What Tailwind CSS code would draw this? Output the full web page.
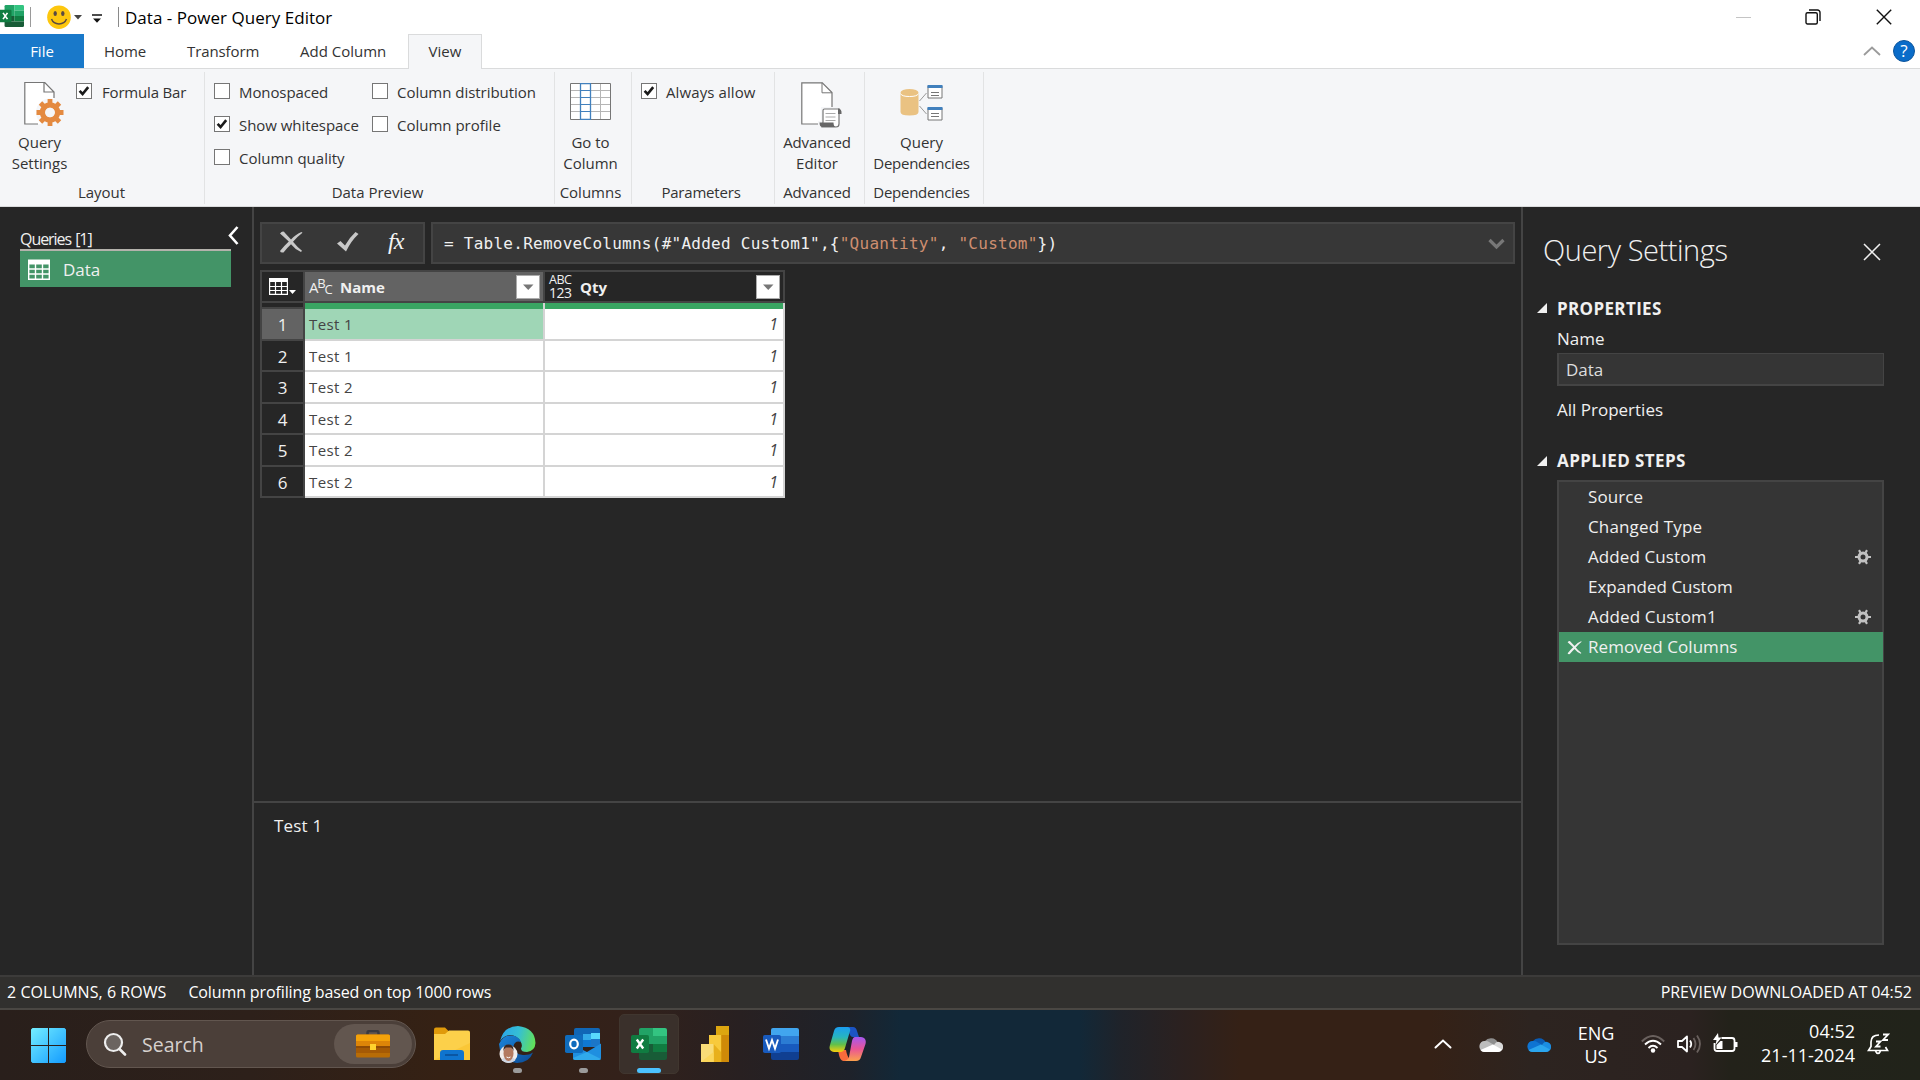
<!DOCTYPE html>
<html lang="en">
<head>
<meta charset="utf-8">
<title>Data - Power Query Editor</title>
<script src="https://cdn.jsdelivr.net/npm/@tailwindcss/browser@4"></script>
</head>
<body class="w-[1920px] h-[1080px] overflow-hidden bg-[#262626] font-['Open_Sans','Noto_Sans',sans-serif] flex flex-col text-[15px] leading-[20px] whitespace-nowrap">

<svg class="hidden">
  <defs>
    <symbol id="check" viewBox="0 0 16 16"><rect x=".5" y=".5" width="15" height="15" fill="#fff" stroke="#767676"/><path d="M3.600 7.800 6.600 11 12.200 4.200" fill="none" stroke="#1a1a1a" stroke-width="2.600"/></symbol>
    <symbol id="uncheck" viewBox="0 0 16 16"><rect x=".5" y=".5" width="15" height="15" fill="#fff" stroke="#767676"/></symbol>
    <symbol id="excel" viewBox="0 0 36 34">
      <path d="M8 3a2 2 0 0 1 2-2h12v16H8z" fill="#21a366"/><path d="M22 1h12a2 2 0 0 1 2 2v6H22z" fill="#33c481"/><path d="M22 9h14v8H22z" fill="#21a366"/><path d="M8 17h14v8H8z" fill="#185c37"/><path d="M22 17h14v8H22z" fill="#107c41"/><path d="M8 25h28v6a2 2 0 0 1-2 2H10a2 2 0 0 1-2-2z" fill="#185c37"/>
      <rect x="0" y="8" width="18" height="18" rx="1.800" fill="#107c41"/><path d="M5.800 12.500 12.200 21.500M12.200 12.500 5.800 21.500" stroke="#fff" stroke-width="2.400"/>
    </symbol>
    <symbol id="gear" viewBox="0 0 16 16"><g fill="none" stroke="#c2c2c2"><circle cx="8" cy="8" r="4" stroke-width="3"/><path d="M0 8h3M13 8h3M4 1.100l1.500 2.600M10.500 12.300l1.500 2.600M12 1.100l-1.500 2.600M5.500 12.300l-1.500 2.600" stroke-width="2.200"/></g></symbol>
    <symbol id="cloud" viewBox="0 0 24 16"><path d="M6 5a7 6 0 0 1 12.500 1L12 11z" class="fill-[var(--a)]"/><path d="M5 16a5 5.500 0 0 1 .8-11 6 6 0 0 1 4.700 1.200L17 10 6 16z" class="fill-[var(--b)]"/><path d="M16 7.500a4 4 0 0 1 3-1.800A5 5 0 0 1 19 16l-6-5z" class="fill-[var(--c)]"/><path d="M1.500 14 14 8.500l9 5a5 5 0 0 1-4 2.500H5a5 5 0 0 1-3.500-2z" class="fill-[var(--d)]"/></symbol>
    <symbol id="drop" viewBox="0 0 24 24"><rect x=".5" y=".5" width="23" height="23" fill="#fff" stroke="#ababab"/><path d="M7 9.500h10.500L12.250 15z" fill="#777"/></symbol>
  </defs>
</svg>

<!-- Title bar -->
<header class="h-[34px] bg-white flex items-center text-black shrink-0">
  <svg class="w-[25px] h-[24px] -ml-px mb-0.5" viewBox="0 0 36 34"><use href="#excel"/></svg>
  <div class="w-px h-5 bg-[#9a9a9a] ml-[6px] mb-px"></div>
  <svg class="w-[24px] h-[24px] ml-4" viewBox="0 0 24 24"><circle cx="12" cy="12.200" r="11.800" fill="#fdc70e"/><ellipse cx="8.200" cy="8.500" rx="1.700" ry="2.500" fill="#5a4a42"/><ellipse cx="15.800" cy="8.500" rx="1.700" ry="2.500" fill="#5a4a42"/><path d="M4.500 14C7 20.500 17 20.500 19.500 14" fill="none" stroke="#5a4a42" stroke-width="1.500"/></svg>
  <svg class="w-[8px] h-[5px] ml-[3px]" viewBox="0 0 8 5"><path d="M0 0h8L4 4.500z" fill="#444"/></svg>
  <svg class="w-[10px] h-[10px] ml-[10px] mt-1" viewBox="0 0 10 10"><path d="M0 1h10" stroke="#111" stroke-width="1.500"/><path d="M1 4.500h8L5 8.800z" fill="#111"/></svg>
  <div class="w-px h-5 bg-[#8a8a8a] ml-[16px] mb-px"></div>
  <span class="ml-[6px] text-[17px] tracking-[0.03px] mt-0.5">Data - Power Query Editor</span>
  <div class="ml-auto flex items-center pr-[28px]">
    <div class="w-[15px] h-px bg-[#c4c4c4] mr-[54px]"></div>
    <svg class="w-[16px] h-[16px] mr-[55px]" viewBox="0 0 16 16" fill="none" stroke="#111" stroke-width="1.400"><rect x="1" y="3.700" width="11.300" height="11.300" rx="1.500"/><path d="M4 1h8.500A2.500 2.500 0 0 1 15 3.500V12"/></svg>
    <svg class="w-[16px] h-[16px]" viewBox="0 0 16 16" stroke="#111" stroke-width="1.400"><path d="M.8.800 15.200 15.200M15.200.800.800 15.200"/></svg>
  </div>
</header>

<!-- Tab strip -->
<nav class="h-[35px] bg-white border-b border-[#dadbdc] flex shrink-0 text-[#333] leading-[34px]">
  <div class="w-[84px] h-[34px] bg-[#1979ca] text-white text-center">File</div>
  <div class="w-[82px] pl-[20px] tracking-[-0.1px]">Home</div>
  <div class="w-[112px] pl-[21px] tracking-[-0.1px]">Transform</div>
  <div class="w-[130px] pl-[22px]">Add Column</div>
  <div class="w-[74px] h-[35px] border border-b-0 border-[#dadbdc] bg-[#f5f6f8] text-center leading-[32px]">View</div>
  <div class="ml-auto flex items-center pr-[5px]">
    <svg class="w-[18px] h-[10px] mr-[12px]" viewBox="0 0 18 10"><path d="M1 9 9 1.500 17 9" fill="none" stroke="#9b9b9b" stroke-width="1.800"/></svg>
    <div class="w-[22px] h-[22px] rounded-full bg-[#0a6cc9] border border-[#0d559c] text-white text-[17px] leading-[20px] text-center">?</div>
  </div>
</nav>

<!-- Ribbon -->
<section class="h-[138px] bg-[#f5f6f8] border-b border-[#dadbdc] flex shrink-0 text-[#333] pt-[3px] pb-[2px]">
  <div class="w-[205px] border-r border-[#e2e3e4] flex flex-col">
    <div class="h-[111px] flex">
      <div class="w-[72px] pl-[7px] pt-[9px] flex flex-col items-center">
        <svg class="w-[42px] h-[47px] ml-[10px] shrink-0" viewBox="0 0 42 47"><path d="M1 1.500h20l9 10V43H1z" fill="#fff"/><path d="M14 43H.8V1.500h20L30 11v6M20 1.500V11h10" fill="none" stroke="#767676" stroke-width="1.200"/><circle cx="26" cy="31.500" r="14" fill="#f5f6f8"/><g fill="none" stroke="#e48a40"><circle cx="26" cy="31.500" r="7.500" stroke-width="5.500"/><path d="M26 18v6M26 39v6M12.500 31.500h6M33.500 31.500h6M16.500 22l4 4M31.500 37l4 4M16.500 41l4-4M31.500 26l4-4" stroke-width="4.800"/></g><circle cx="26" cy="31.500" r="4.800" fill="#f5f6f8"/></svg>
        <div class="text-center leading-[21px] mt-[4px]">Query<br>Settings</div>
      </div>
      <div class="pl-[4px] pt-[11px] flex gap-[10px]"><svg class="w-4 h-4"><use href="#check"/></svg><span class="-mt-px tracking-[-0.18px]">Formula Bar</span></div>
    </div>
    <div class="text-center leading-[20px] -mt-px pr-px">Layout</div>
  </div>
  <div class="w-[350px] border-r border-[#e2e3e4] flex flex-col">
    <div class="h-[111px] flex pt-[11px] pl-[9px]">
      <div class="w-[158px] flex flex-col gap-[13px]">
        <div class="flex gap-[9px] h-5"><svg class="w-4 h-4"><use href="#uncheck"/></svg><span class="-mt-px tracking-[-0.1px]">Monospaced</span></div>
        <div class="flex gap-[9px] h-5"><svg class="w-4 h-4"><use href="#check"/></svg><span class="-mt-px tracking-[-0.05px]">Show whitespace</span></div>
        <div class="flex gap-[9px] h-5"><svg class="w-4 h-4"><use href="#uncheck"/></svg><span class="-mt-px">Column quality</span></div>
      </div>
      <div class="flex flex-col gap-[13px]">
        <div class="flex gap-[9px] h-5"><svg class="w-4 h-4"><use href="#uncheck"/></svg><span class="-mt-px tracking-[-0.03px]">Column distribution</span></div>
        <div class="flex gap-[9px] h-5"><svg class="w-4 h-4"><use href="#uncheck"/></svg><span class="-mt-px">Column profile</span></div>
      </div>
    </div>
    <div class="text-center leading-[20px] -mt-px pr-[4px]">Data Preview</div>
  </div>
  <div class="w-[77px] border-r border-[#e2e3e4] flex flex-col items-center pr-[5px]">
    <div class="h-[111px] pt-[11px] text-center leading-[21px]">
      <svg class="w-[41px] h-[37px] ml-[7px] mb-[12px]" viewBox="0 0 41 37"><path d="M.5.500h40v36H.5z" fill="#fff"/><g fill="none" stroke="#b5b5b5"><path d="M0 7.500h41M0 14.500h41M0 21.500h41M0 28.500h41M30.500 0v37"/></g><g stroke="#4180bd"><path d="M10.500 7.500h10M10.500 14.500h10M10.500 21.500h10M10.500 28.500h10"/></g><path d="M.5.500h40v36H.5z" fill="none" stroke="#767676"/><path d="M10.500.500h10v36h-10z" fill="none" stroke="#4180bd" stroke-width="1.300"/></svg>
      Go to<br>Column
    </div>
    <div class="leading-[20px] -mt-px">Columns</div>
  </div>
  <div class="w-[143px] border-r border-[#e2e3e4] flex flex-col items-center">
    <div class="h-[111px] w-full pt-[11px] pl-[9px] flex gap-[9px]"><svg class="w-4 h-4"><use href="#check"/></svg><span class="-mt-px tracking-[0.1px]">Always allow</span></div>
    <div class="leading-[20px] -mt-px pr-[4px] tracking-[-0.2px]">Parameters</div>
  </div>
  <div class="w-[90px] border-r border-[#e2e3e4] flex flex-col items-center pr-[5px]">
    <div class="h-[111px] pt-[10px] text-center leading-[21px]">
      <svg class="w-[42px] h-[46px] ml-[18px] mb-[4px]" viewBox="0 0 42 46"><path d="M.8.800h20.500L31 10.500V42H.8z" fill="#fff" stroke="#767676" stroke-width="1.200"/><path d="M21 .800V10.800h10" fill="none" stroke="#767676"/><path d="M20 25h22v21H17V39h3z" fill="#f5f6f8"/><path d="M22 40V28.500q0-1.500 1.500-1.500H38v15q0 3-3 3H21z" fill="#fff" stroke="#767676" stroke-width="1.200"/><path d="M24.500 31.500h10M24.500 35h10M24.500 38.500h10" stroke="#aaa"/><path d="M18.500 40.500h14q0 4 2.500 4.500H21.500q-3 0-3-4.500zM37 26.500q4 0 3.500 5.500H37z" fill="#666"/></svg>
      <div class="tracking-[-0.1px]">Advanced</div>Editor
    </div>
    <div class="leading-[20px] -mt-px tracking-[-0.1px]">Advanced</div>
  </div>
  <div class="w-[119px] border-r border-[#e2e3e4] flex flex-col items-center pr-[5px]">
    <div class="h-[111px] pt-[12px] text-center leading-[21px]">
      <svg class="w-[43px] h-[38px] mx-auto mb-[10px]" viewBox="0 0 43 38"><path d="M.5 9v19q0 3.500 9 3.500t9-3.500V9z" fill="#eac282"/><ellipse cx="9.500" cy="8.500" rx="9" ry="3.500" fill="#eac282"/><path d="M.5 9.500q1 3 9 3t9-3" fill="none" stroke="#fff"/><path d="M19.500 17 26.500 9M19.500 22 26.500 30" stroke="#999"/><g fill="#fff" stroke="#767676"><path d="M28 2h14v12H28zM28 24h14v12H28z"/><path d="M31 8.500h8M31 11.500h8M31 29.500h8M31 32.500h8"/></g><path d="M27.500 1h15v3h-15zM27.500 23h15v3h-15z" fill="#4180bd"/></svg>
      Query<br><span class="tracking-[-0.25px]">Dependencies</span>
    </div>
    <div class="leading-[20px] -mt-px tracking-[-0.25px]">Dependencies</div>
  </div>
</section>

<!-- Workspace -->
<main class="h-[768px] flex shrink-0 text-[#f0f0f0]">
  <!-- Query list -->
  <aside class="w-[254px] border-r-2 border-[#444] pl-[20px]">
    <div class="h-[42px] flex items-end justify-between w-[211px]">
      <span class="text-[16px] leading-[20px] tracking-[-1.05px] [word-spacing:1px]">Queries [1]</span>
      <svg class="w-[12px] h-[19px] mb-[4px] -mr-[8px]" viewBox="0 0 12 19"><path d="M10.500 1 3 9.500 10.500 18" fill="none" stroke="#fff" stroke-width="2.600"/></svg>
    </div>
    <div class="w-[211px] h-[38px] bg-[#439467] border-t-2 border-[#b4b2ac] flex items-center pl-[8px]">
      <svg class="w-[22px] h-[21px]" viewBox="0 0 22 21" fill="none" stroke="#fff"><path d="M0 3h22" stroke-width="5"/><path d="M.7 3v17.300h20.600V3M0 10h22M0 15h22M7.500 4v16M14.500 4v16" stroke-width="1.400"/></svg>
      <span class="ml-[13px] text-[17px] mt-px">Data</span>
    </div>
  </aside>

  <!-- Preview -->
  <section class="w-[1267px] flex flex-col">
    <div class="h-[594px] pl-[6px] pt-[15px]">
      <div class="flex gap-[6px] h-[42px]">
        <div class="w-[165px] border-2 border-[#444] bg-[#373737] flex items-center pl-[17px]">
          <svg class="w-[24px] h-[22px] -mt-0.5" viewBox="0 0 24 22"><path d="M1 2.500Q4-1 6 2l6 6.500Q17 3 22.500 1l1 .8Q18 6 14 10.800q4 5 9 9l-1 1.200q-6-2.500-10-7.700Q8 17 4.500 21.500q-3 .5-3.500-1.500Q5 15 9.800 10.500 5 6 1 2.500z" fill="#c8c8c8"/></svg>
          <svg class="w-[22px] h-[20px] ml-[34px] -mt-0.5" viewBox="0 0 22 20"><path d="M0 11.500 3.500 9 8 13.500Q12 6 18.500 0L21.500 2Q14 9 9 19.500z" fill="#c8c8c8"/></svg>
          <span class="ml-[29px] text-[24px] italic font-['Liberation_Serif',serif] tracking-[-1px] text-[#f4f4f4] pb-1">fx</span>
        </div>
        <div class="w-[1084px] border-2 border-[#444] bg-[#373737] flex items-center justify-between pl-[11px] pr-[8px]">
          <span class="mt-px font-['DejaVu_Sans_Mono',monospace] text-[16px] tracking-[0.26px] whitespace-pre">= Table.RemoveColumns(#"Added Custom1",{<span class="text-[#ce8e70]">"Quantity"</span>, <span class="text-[#ce8e70]">"Custom"</span>})</span>
          <svg class="w-[17px] h-[12px] mt-px" viewBox="0 0 17 12"><path d="M1.500 2 8.500 9 15.500 2" fill="none" stroke="#777" stroke-width="3.200"/></svg>
        </div>
      </div>

      <div class="mt-[6px] w-[525px]">
        <div class="grid grid-cols-[45px_240px_240px] h-[33px] bg-[#444] pt-[2px] pb-[2px]">
          <div class="bg-[#262626] ml-[2px] mr-[2px] flex items-center pl-[7px] gap-px">
            <svg class="w-[19px] h-[17px]" viewBox="0 0 19 17" fill="none" stroke="#fff"><path d="M0 2h19" stroke-width="4"/><path d="M.6 2v14.400h17.800V2M0 8.500h19M0 12.500h19M6.500 4v13M12.500 4v13" stroke-width="1.200"/></svg>
            <svg class="w-[7px] h-[4px] mt-[10px]" viewBox="0 0 7 4"><path d="M0 0h7L3.500 4z" fill="#fff"/></svg>
          </div>
          <div class="bg-[#636363] mr-[2px] flex items-center px-[4px] pr-[3px]">
            <span class="flex items-center text-[13px] leading-[14px] tracking-[-1.200px] w-[31px]"><span class="text-[15px]">A</span><span class="-mt-[8px]">B</span><span class="mt-[5px]">C</span></span>
            <span class="font-bold">Name</span>
            <svg class="w-6 h-6 ml-auto"><use href="#drop"/></svg>
          </div>
          <div class="bg-[#262626] mr-[2px] flex items-center px-[4px] pr-[3px]">
            <span class="flex flex-col w-[31px]"><span class="text-[12.5px] leading-[12px] tracking-[-0.5px]">ABC</span><span class="text-[14px] leading-[13px] tracking-[-0.5px]">123</span></span>
            <span class="font-bold">Qty</span>
            <svg class="w-6 h-6 ml-auto"><use href="#drop"/></svg>
          </div>
        </div>
        <div class="grid grid-cols-[45px_238px_2px_238px_2px] h-[6px]">
          <div class="bg-[#262626] border-x-2 border-b-2 border-[#444]"></div><div class="bg-[#39a562]"></div><div class="bg-[#d4d4d4]"></div><div class="bg-[#39a562]"></div><div class="bg-[#d4d4d4]"></div>
        </div>
        <div id="rows" class="text-[#444]"></div>
      </div>
    </div>
    <div class="h-[173px] border-t-2 border-[#444] pt-[13px] pl-[20px] text-[17px] tracking-[0.2px]">Test 1</div>
  </section>

  <!-- Query settings -->
  <aside class="w-[399px] border-l-2 border-[#444] pl-[14px] pr-[36px] text-[17px]">
    <div class="flex items-center justify-between h-[86px] pl-[6px] pr-[3px]">
      <span class="text-[29px] leading-[40px] font-light tracking-[-0.45px]">Query Settings</span>
      <svg class="w-[18px] h-[18px] mt-[4px]" viewBox="0 0 18 18" stroke="#f0f0f0" stroke-width="1.500"><path d="M1 1 17 17M17 1 1 17"/></svg>
    </div>
    <div class="flex items-center h-[30px]"><svg class="w-[10px] h-[10px] mr-[10px]" viewBox="0 0 10 10"><path d="M10 0v10H0z" fill="#f0f0f0"/></svg><span class="font-bold tracking-[0.35px] mt-px">PROPERTIES</span></div>
    <div class="pl-[20px]">
      <div class="h-[30px] leading-[32px]">Name</div>
      <div class="h-[33px] border-2 border-r border-t border-[#444] bg-[#353535] pl-[7px] leading-[32px] text-[#ddd]">Data</div>
      <div class="h-[47px] leading-[47px]">All Properties</div>
    </div>
    <div class="flex items-center h-[54px] pt-[2px]"><svg class="w-[10px] h-[10px] mr-[10px]" viewBox="0 0 10 10"><path d="M10 0v10H0z" fill="#f0f0f0"/></svg><span class="font-bold tracking-[0.4px]">APPLIED STEPS</span></div>
    <div class="-mt-[7px] ml-[20px] h-[465px] border-2 border-[#444] bg-[#353535] leading-[30px]">
      <div class="h-[30px] pl-[29px] tracking-[0.1px]">Source</div>
      <div class="h-[30px] pl-[29px] tracking-[0.15px]">Changed Type</div>
      <div class="h-[30px] pl-[29px] pr-[11px] flex justify-between items-center"><span class="tracking-[0.1px]">Added Custom</span><svg class="w-4 h-4"><use href="#gear"/></svg></div>
      <div class="h-[30px] pl-[29px]">Expanded Custom</div>
      <div class="h-[30px] pl-[29px] pr-[11px] flex justify-between items-center"><span class="tracking-[0.15px]">Added Custom1</span><svg class="w-4 h-4"><use href="#gear"/></svg></div>
      <div class="h-[30px] pl-[8px] -mr-px bg-[#439467] flex items-center gap-[6px]"><svg class="w-[15px] h-[15px]" viewBox="0 0 24 22"><path d="M1 2.500Q4-1 6 2l6 6.500Q17 3 22.500 1l1 .8Q18 6 14 10.800q4 5 9 9l-1 1.200q-6-2.500-10-7.700Q8 17 4.500 21.500q-3 .5-3.500-1.500Q5 15 9.800 10.500 5 6 1 2.500z" fill="#f0f0f0"/></svg><span class="tracking-[0.05px]">Removed Columns</span></div>
    </div>
  </aside>
</main>

<!-- Status bar -->
<footer class="h-[35px] bg-[#31302e] border-t-2 border-t-[#3c3b3a] border-b-2 border-b-[#4a4743] flex items-center px-[8px] pl-[7px] pb-0.5 text-[16px] text-white shrink-0">
  <span class="tracking-[0.05px]">2 COLUMNS, 6 ROWS</span>
  <span class="ml-[22px] tracking-[-0.12px]">Column profiling based on top 1000 rows</span>
  <span class="ml-auto tracking-[-0.03px]">PREVIEW DOWNLOADED AT 04:52</span>
</footer>

<!-- Taskbar -->
<div class="h-[70px] shrink-0 flex items-center text-white bg-[linear-gradient(90deg,#291f1b_0px,#2d201a_250px,#352114_440px,#33211a_620px,#282021_740px,#1e222a_850px,#122838_900px,#122838_1080px,#1f232a_1120px,#2b2120_1180px,#352116_1240px,#352116_1430px,#2d2420_1530px,#2b2220_1690px,#23221a_1730px,#21231a_1920px)]">
  <svg class="w-[35px] h-[35px] ml-[31px]" viewBox="0 0 35 35"><defs><linearGradient id="win" x1="0" y1="0" x2="35" y2="35" gradientUnits="userSpaceOnUse"><stop stop-color="#74eeff"/><stop offset="1" stop-color="#139bff"/></linearGradient></defs><path d="M1.500 0H17v17H0V1.500zM18 0h15.500L35 1.500V17H18zM0 18h17v17H1.500L0 33.500zM18 18h17v15.500L33.500 35H18z" fill="url(#win)"/></svg>
  <div class="ml-[20px] mt-[-2px] w-[330px] h-[48px] rounded-full bg-[#4b3f39] border border-[#62564f] flex items-center pl-[16px] pr-[3px]">
    <svg class="w-[24px] h-[24px]" viewBox="0 0 24 24"><circle cx="10.500" cy="10.500" r="8.500" fill="#6b6460" stroke="#eee" stroke-width="2.200"/><path d="M16.500 17 22 22.500" stroke="#eee" stroke-width="2.600" stroke-linecap="round"/></svg>
    <span class="ml-[15px] text-[19.5px] text-[#d6d1ce] mt-px">Search</span>
    <div class="ml-auto w-[78px] h-[40px] rounded-full bg-[#62564f] flex items-center justify-center">
      <svg class="w-[34px] h-[28px]" viewBox="0 0 34 28"><path d="M11.500 5V3q0-2 2-2h7q2 0 2 2v2" fill="none" stroke="#3a3a40" stroke-width="2.500"/><rect y="4.500" width="34" height="23" rx="1.500" fill="#b86c06"/><path d="M0 6q0-1.500 1.500-1.500h31Q34 4.500 34 6v5H0z" fill="#f4a20a"/><path d="M0 11h34v5H0z" fill="#dd8508"/><path d="M0 16h34v2H0z" fill="#8f4b04"/><path d="M0 18h34v5H0z" fill="#a55a05"/><rect x="14" y="14" width="6" height="6" fill="#ffd22e"/></svg>
    </div>
  </div>
  <svg class="w-[36px] h-[34px] ml-[18px] mt-[-2px]" viewBox="0 0 36 34"><path d="M0 2.500Q0 .5 2 .5h9l4 4v5H0z" fill="#e09a0a"/><path d="M0 7h11l4-3.500h19q2 0 2 2V33H0z" fill="#fcd04a"/><path d="M36 16V33H0z" fill="#f8c12c" opacity=".6"/><path d="M6 33v-7q0-3 3-3h18q3 0 3 3v7z" fill="#0f74cf"/><path d="M11 28h13" stroke="#0a4f99" stroke-width="1.600"/></svg>
  <div class="relative w-[37px] h-[70px] ml-[29px] flex items-center">
    <svg class="w-[37px] h-[37px] -mt-px" viewBox="0 0 37 37"><defs><linearGradient id="ed" x1="0" y1=".3" x2="1" y2=".5"><stop stop-color="#2aa4ea"/><stop offset=".5" stop-color="#35bfd4"/><stop offset="1" stop-color="#62e05a"/></linearGradient><linearGradient id="eb" x1="0" y1="0" x2="1" y2="1"><stop stop-color="#1b86dc"/><stop offset="1" stop-color="#0c4a94"/></linearGradient></defs><path d="M1 15Q5 0 19 0 36 2 36.500 17 36 25 28 26 22 26 22 22.500 24 19 21.500 15.500 18 9 11 9 5 9.500 1 15z" fill="url(#ed)"/><path d="M0 18Q4 9 12 9.500 20 10 22 16 16 14 14.500 20 14 28 24 29 30 29.500 34 26.500 30 37 18 37 1 35 0 18z" fill="url(#eb)"/><ellipse cx="9.500" cy="28" rx="9" ry="9" fill="#f0ecea"/><path d="M2.500 34q2-3 5-3h4q4 1 5 3-3 3-7 3t-7-3z" fill="#cfd6e2"/><ellipse cx="9.500" cy="27.500" rx="5" ry="7.500" fill="#b37a60"/><path d="M4.500 25q-.5-6.500 5-6.500t5 6.500q-1-3-2.500-3.500H7q-1.500.5-2.500 3.500z" fill="#3a2722"/><path d="M7.500 31q2 1.500 4 0" fill="none" stroke="#fff"/></svg>
    <div class="absolute left-[14px] top-[58px] w-[9px] h-[5px] rounded-full bg-[#9b9b9b]"></div>
  </div>
  <div class="relative w-[36px] h-[70px] ml-[29px] flex items-center">
    <svg class="w-[36px] h-[34px] mb-[2px]" viewBox="0 0 36 34"><path d="M9 3q0-2 2-2h22q2 0 2 2v15H9z" fill="#1066b5"/><path d="M18 7h8v6h-8z" fill="#32a9e7"/><path d="M26 6h9v6h-9z" fill="#58d9fd"/><path d="M26 12h9v8h-9z" fill="#1b76c8"/><path d="M18 13h8v7h-8z" fill="#0f78d4"/><path d="M8 18 22 25 36 16.500V31q0 2-2 2H10q-2 0-2-2z" fill="#1f8fe0"/><path d="M22 25 36 32q-1 1-2 1H10q-2 0-2-2z" fill="#35b0ee" opacity=".8"/><rect y="8" width="18" height="18" rx="1.800" fill="#0f6cbd"/><ellipse cx="9" cy="17" rx="3.800" ry="4.300" fill="none" stroke="#fff" stroke-width="2.200"/></svg>
    <div class="absolute left-[14px] top-[58px] w-[9px] h-[5px] rounded-full bg-[#9b9b9b]"></div>
  </div>
  <div class="relative w-[60px] h-[60px] ml-[18px] mt-[-2px] rounded-[5px] bg-[#3a302b] border border-[#40362f] flex items-center justify-center">
    <svg class="w-[36px] h-[34px]"><use href="#excel"/></svg>
    <div class="absolute left-[17px] top-[53px] w-[24px] h-[5px] rounded-full bg-[#4cc2ff]"></div>
  </div>
  <svg class="w-[28px] h-[36px] ml-[22px] mt-[-2px]" viewBox="0 0 28 36"><path d="M15 0H28v36H15z" fill="#dda610"/><path d="M20.500 9h7.500v27h-7.500z" fill="#cf8a08"/><path d="M8 9h12v27H8z" fill="#f8ca3c"/><path d="M12.500 18l7.500 8v10h-7.500z" fill="#e8b01c"/><path d="M0 18h12.500v18H0z" fill="#f9dc78"/><path d="M0 36l12.500-10v10z" fill="#fbd65a"/></svg>
  <svg class="w-[36px] h-[34px] ml-[34px] mt-[-2px]" viewBox="0 0 36 34"><path d="M8 3q0-2 2-2h24q2 0 2 2v6H8z" fill="#41a5ee"/><path d="M8 9h28v8H8z" fill="#2b7cd3"/><path d="M8 17h28v8H8z" fill="#185abd"/><path d="M8 25h28v6q0 2-2 2H10q-2 0-2-2z" fill="#103f91"/><rect y="8" width="18" height="18" rx="1.800" fill="#185abd"/><path d="M3 12.500 6 21.500 9 13 12 21.500 15 12.500" fill="none" stroke="#fff" stroke-width="1.900"/></svg>
  <svg class="w-[37px] h-[34px] ml-[30px] mt-[-3px]" viewBox="0 0 37 34"><defs><linearGradient id="c1" x2="0" y2="1"><stop stop-color="#1b9df0"/><stop offset=".4" stop-color="#27b5c0"/><stop offset=".7" stop-color="#62c04a"/><stop offset="1" stop-color="#f7cf0c"/></linearGradient><linearGradient id="c2" x2="0" y2="1"><stop stop-color="#a558f0"/><stop offset=".5" stop-color="#ea5595"/><stop offset="1" stop-color="#fba14c"/></linearGradient></defs><path d="M14 0h10q3 0 4 4l2 6h-6q-3 0-4-5-1-5-6-5z" fill="#1b54c4"/><path d="M9 23h8q1 7 5 11h-8q-3-1-4-6z" fill="#f76b3c"/><path d="M10 0h9q3 1 2 4l-5 17q-1 4-5 4H5q-6-1-4-7L5 4q1-4 5-4z" fill="url(#c1)"/><path d="M26 10h6q6 1 4.500 7L32 30q-1 4-5 4H15q4-1 5-4l3-16q1-4 3-4z" fill="url(#c2)"/></svg>

  <div class="ml-auto flex items-center pr-[30px] text-[18px]">
    <svg class="w-[18px] h-[10px] mt-[-3px]" viewBox="0 0 18 10"><path d="M1.500 8.500 9 1.500 16.500 8.500" fill="none" stroke="#fff" stroke-width="2" stroke-linecap="round"/></svg>
    <svg class="w-[24px] h-[16px] ml-[27px] mt-[-3px] [--a:#8e8e8e] [--b:#bdbdbd] [--c:#d9d9d9] [--d:#ffffff]"><use href="#cloud"/></svg>
    <svg class="w-[24px] h-[16px] ml-[24px] mt-[-3px] [--a:#0a5cb4] [--b:#0e74d2] [--c:#1a8de2] [--d:#2ba6ee]"><use href="#cloud"/></svg>
    <div class="w-[40px] ml-[25px] text-center leading-[23px] mt-[-1px]">ENG<br>US</div>
    <svg class="w-[24px] h-[18px] ml-[25px] mt-[-2px]" viewBox="0 0 24 18" fill="none" stroke-width="1.900"><path d="M.8 6.500q11.200-11 22.400 0" stroke="#6a615e"/><path d="M4 9.500q8-7.500 16 0M7.500 13q4.500-4.300 9 0" stroke="#fff"/><circle cx="12" cy="15.500" r="2.200" fill="#fff"/></svg>
    <svg class="w-[25px] h-[20px] ml-[12px] mt-[-2px]" viewBox="0 0 25 20" fill="none" stroke="#fff" stroke-width="1.800"><path d="M1 7v6h4l5 4.500V2.500L5 7z" stroke-linejoin="round"/><path d="M13 6.500q2.500 3.500 0 7"/><path d="M16.500 4q4 6 0 12M20 1.500q6 8.500 0 17" stroke="#6a615e"/></svg>
    <svg class="w-[25px] h-[20px] ml-[11px] mt-[-5px]" viewBox="0 0 25 20" fill="none" stroke="#fff" stroke-width="1.800"><path d="M8.500 5H19q2.500 0 2.500 2.500v8q0 2.500-2.500 2.500H4q-2.500 0-2.500-2.500V10"/><path d="M22 9h2.500v5H22z" fill="#fff" stroke="none"/><path d="M5 0 0 7h3.500L2.500 12 8.500 4.500H5.500z" fill="#fff" stroke="none"/><path d="M3.500 16v-4l4-4h2v8z" fill="#fff" stroke="none"/></svg>
    <div class="w-[110px] ml-[7px] text-right leading-[24px] mt-[-4px]">04:52<br>21-11-2024</div>
    <svg class="w-[23px] h-[24px] ml-[12px] mt-[-2px]" viewBox="0 0 23 24" fill="none" stroke="#fff" stroke-width="1.700"><path d="M12 3Q4 3 4 10v4.500L1.500 18.500H20.500L18.500 15"/><path d="M8.500 19q2.500 5 5 0"/><path d="M9 9.500h4.500L9 14.500h4.500M16 2.500h5L16 8h5" stroke-width="1.800"/></svg>
  </div>
</div>

<script>
const rows = ['Test 1', 'Test 1', 'Test 2', 'Test 2', 'Test 2', 'Test 2'];
document.getElementById('rows').innerHTML = rows.map((name, i) => `
  <div class="grid grid-cols-[45px_240px_240px] grid-rows-[100%] ${i % 2 ? 'h-[31px]' : 'h-[32px]'} leading-[31px]">
    <div class="border-2 border-t-0 border-[#444] ${i ? 'bg-[#262626]' : 'bg-[#636363]'} text-[#f0f0f0] text-[17px] text-center">${i + 1}</div>
    <div class="border-r-2 border-b-2 border-[#d4d4d4] pl-[4px] tracking-[0.4px] ${i ? 'bg-white' : 'bg-[#9fd6b6]'}">${name}</div>
    <div class="border-r-2 border-b-2 border-[#d4d4d4] bg-white pr-[5px] text-right text-[16px] italic">1</div>
  </div>`).join('');
</script>
</body>
</html>
